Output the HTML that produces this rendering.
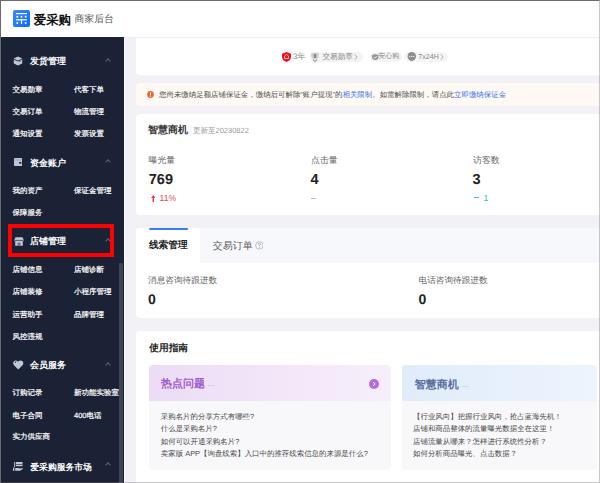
<!DOCTYPE html>
<html><head><meta charset="utf-8">
<style>
*{margin:0;padding:0;box-sizing:border-box}
html,body{width:600px;height:483px;overflow:hidden;background:#f2f2f6}
body{position:relative;font-family:"Liberation Sans",sans-serif;color:#333;text-rendering:geometricPrecision}
.a{position:absolute}
.t{position:absolute;white-space:nowrap;font-size:calc(var(--fs)*1px);line-height:calc(var(--lh,var(--fs))*1px);top:calc((var(--cy) - var(--fs)*.4)*1px)}
#frame{position:absolute;left:0;top:0;width:600px;height:483px;border-top:1px solid #6c6c6c;border-left:1px solid #6a6a6a;border-right:1px solid rgba(116,116,116,.38);border-bottom:1px solid rgba(116,116,116,.38);z-index:50}
.card{position:absolute;background:#fff;border-radius:4px}
.sh{--fs:9;font-weight:bold;color:#fff;left:30px}
.si{--fs:7.5;color:#fff;-webkit-text-stroke:0.2px #fff}
.c1{left:12.5px}.c2{left:74px}
.chev{position:absolute;width:4px;height:4px;border-left:1px solid #5d6477;border-top:1px solid #5d6477;transform:rotate(45deg)}
.ic{position:absolute}
</style></head><body>
<!-- header -->
<div class="a" style="left:0;top:0;width:600px;height:37px;background:#fff"></div>
<div class="a" style="left:13px;top:10px;width:17px;height:17px;border-radius:2px;background:linear-gradient(135deg,#3d8bff,#0b6bff)">
  <svg width="17" height="17" viewBox="0 0 17 17" style="position:absolute;left:0;top:0">
    <rect x="3" y="3" width="11" height="1.2" fill="#fff"/>
    <circle cx="4.3" cy="6.8" r="1" fill="#fff"/><circle cx="8.5" cy="6.8" r="1" fill="#fff"/><circle cx="12.7" cy="6.8" r="1" fill="#fff"/>
    <rect x="3" y="9.2" width="11" height="1.2" fill="#fff"/>
    <rect x="7.9" y="9.2" width="1.2" height="4.8" fill="#fff"/>
    <circle cx="4.3" cy="13" r="1" fill="#fff"/><circle cx="12.7" cy="13" r="1" fill="#fff"/>
  </svg>
</div>
<div class="t" style="left:33.8px;--cy:18.9;--fs:12.4;font-weight:900;color:#111">爱采购</div>
<div class="t" style="left:74.5px;--cy:18.7;--fs:9.85;color:#555">商家后台</div>

<!-- sidebar -->
<div class="a" style="left:0;top:37px;width:124px;height:446px;background:#1b2236"></div>
<svg class="ic" style="left:13px;top:55.5px" width="10" height="10" viewBox="0 0 10 10"><path d="M5 0.5 L9.2 2.5 V7.5 L5 9.6 L0.8 7.5 V2.5 Z" fill="#bfc6d8"/><path d="M1 3.2 L5 5 L9 3.2" stroke="#1b2236" stroke-width="0.9" fill="none"/><path d="M6.8 4.3 V5.8" stroke="#1b2236" stroke-width="0.9"/></svg>
<div class="t sh" style="--cy:61">发货管理</div>
<div class="chev" style="left:106px;top:58.8px"></div>
<div class="t si c1" style="--cy:89.4">交易勋章</div>
<div class="t si c2" style="--cy:89.4">代客下单</div>
<div class="t si c1" style="--cy:111.4">交易订单</div>
<div class="t si c2" style="--cy:111.4">物流管理</div>
<div class="t si c1" style="--cy:133.4">通知设置</div>
<div class="t si c2" style="--cy:133.4">发票设置</div>

<svg class="ic" style="left:13.8px;top:158px" width="8.3" height="8" viewBox="0 0 9 8" preserveAspectRatio="none"><rect x="0" y="0" width="9" height="8" rx="1" fill="#bfc6d8"/><rect x="1" y="1.6" width="7" height="0.7" fill="#8a92a8"/><rect x="5.5" y="4" width="2.5" height="1.6" fill="#1b2236"/></svg>
<div class="t sh" style="--cy:162.2">资金账户</div>
<div class="chev" style="left:106px;top:160.4px"></div>
<div class="t si c1" style="--cy:190.3">我的资产</div>
<div class="t si c2" style="--cy:190.3">保证金管理</div>
<div class="t si c1" style="--cy:211.9">保障服务</div>

<div class="a" style="left:8px;top:224px;width:106px;height:33px;border:4px solid #f00"></div>
<svg class="ic" style="left:13.5px;top:236.5px" width="10" height="9" viewBox="0 0 10 9"><path d="M1.5 0.3 H8.5 L9.8 3.2 Q9.8 4.2 8.8 4.3 V8.7 H1.2 V4.3 Q0.2 4.2 0.2 3.2 Z" fill="#bfc6d8"/><path d="M0.6 3.4 H9.4" stroke="#1b2236" stroke-width="0.7"/><rect x="3.5" y="5.6" width="3" height="3.1" fill="#1b2236" opacity="0.5"/></svg>
<div class="t sh" style="--cy:240.8">店铺管理</div>
<div class="chev" style="left:106px;top:238.6px"></div>
<div class="t si c1" style="--cy:269.4">店铺信息</div>
<div class="t si c2" style="--cy:269.4">店铺诊断</div>
<div class="t si c1" style="--cy:291.4">店铺装修</div>
<div class="t si c2" style="--cy:291.4">小程序管理</div>
<div class="t si c1" style="--cy:313.6">运营助手</div>
<div class="t si c2" style="--cy:313.6">品牌管理</div>
<div class="t si c1" style="--cy:335.5">风控违规</div>

<svg class="ic" style="left:13px;top:359.5px" width="10.5" height="10" viewBox="0 0 10.5 10"><path d="M5.25 9.6 L1 5.2 Q-0.6 3.2 0.9 1.3 Q2.9 -0.6 5.25 1.6 Q7.6 -0.6 9.6 1.3 Q11.1 3.2 9.5 5.2 Z" fill="#bfc6d8"/><path d="M3.4 1.2 Q2.2 1.6 2.4 3" stroke="#1b2236" stroke-width="0.8" fill="none"/></svg>
<div class="t sh" style="--cy:365">会员服务</div>
<div class="chev" style="left:106px;top:362.8px"></div>
<div class="t si c1" style="--cy:391.6">订购记录</div>
<div class="t si c2" style="--cy:391.6">新功能实验室</div>
<div class="t si c1" style="--cy:414.5">电子合同</div>
<div class="t si c2" style="--cy:414.5">400电话</div>
<div class="t si c1" style="--cy:436.4">实力供应商</div>

<svg class="ic" style="left:13px;top:461.5px" width="10" height="9" viewBox="0 0 10 9"><rect x="1.2" y="0" width="1" height="5" fill="#bfc6d8"/><rect x="3" y="0" width="6.5" height="4.2" fill="#bfc6d8"/><rect x="3" y="2" width="6.5" height="0.6" fill="#1b2236"/><rect x="0" y="5.5" width="1.3" height="3.4" fill="#bfc6d8"/><path d="M2.2 6 H6 Q7 6 7 6.8 L9.5 5.8 Q10 6.5 9.5 7.2 L7 8.8 H2.2 Z" fill="#bfc6d8"/></svg>
<div class="t sh" style="--cy:466.3;--fs:8.8;left:30.3px">爱采购服务市场</div>
<div class="chev" style="left:106px;top:463.4px"></div>
<div class="a" style="left:124px;top:37px;width:1px;height:446px;background:#fbfbfd"></div>
<div class="a" style="left:118.8px;top:263px;width:4px;height:220px;background:#3d4456;border-radius:1px"></div>

<!-- main: card 1 -->
<div class="card" style="left:136px;top:27px;width:470px;height:48px"></div>
<svg class="ic" style="left:281.5px;top:51.5px" width="9" height="10" viewBox="0 0 9 10"><path d="M4.5 0 L9 1.8 V5 Q9 8.3 4.5 10 Q0 8.3 0 5 V1.8 Z" fill="#f0131e"/><path d="M2.5 4 L4.5 2.5 L6.5 4 V6.5 H2.5 Z" fill="none" stroke="#fff" stroke-width="0.8" opacity="0.8"/></svg>
<div class="t" style="left:293px;--cy:56.3;--fs:8;color:#888">3年</div>
<div class="a" style="left:310px;top:52px;width:53px;height:9.5px;border-radius:5px;background:#f3f3f4"></div>
<svg class="ic" style="left:310px;top:51.5px" width="10" height="10" viewBox="0 0 10 10"><path d="M1 1.5 L5 0.5 L9 1.5 L8.5 5.5 L5 7.5 L1.5 5.5 Z" fill="#cfcfd2"/><rect x="3.8" y="2" width="2.4" height="4" fill="#888"/><path d="M2.8 7.5 L5 9.5 L7.2 7.5" stroke="#777" stroke-width="1" fill="none"/></svg>
<div class="t" style="left:322.5px;--cy:56.5;--fs:7.6;color:#888">交易勋章</div>
<svg class="ic" style="left:354px;top:53.5px" width="4" height="6" viewBox="0 0 4 6"><path d="M0.6 0.4 L3.2 3 L0.6 5.6" stroke="#999" stroke-width="0.8" fill="none"/></svg>
<div class="a" style="left:370px;top:52px;width:32px;height:9.5px;border-radius:5px;background:#f3f3f4"></div>
<svg class="ic" style="left:372px;top:53.5px" width="6.5" height="6.5" viewBox="0 0 7 7"><path d="M3.5 0 L7 1.2 V3.5 Q7 6 3.5 7 Q0 6 0 3.5 V1.2 Z" fill="#999"/><path d="M1.8 3.4 L3.1 4.6 L5.3 2.4" stroke="#fff" stroke-width="0.9" fill="none"/></svg>
<div class="t" style="left:378.3px;--cy:56.1;--fs:7;color:#888">安心购</div>
<div class="a" style="left:404px;top:52px;width:44px;height:9.5px;border-radius:5px;background:#f5f5f6"></div>
<svg class="ic" style="left:406.5px;top:52px" width="9.5" height="9.5" viewBox="0 0 10 10"><circle cx="5" cy="4.6" r="4.5" fill="#8d8d8d"/><path d="M3 8 L5 10 L6.5 8" fill="#8d8d8d"/><circle cx="2.9" cy="4.6" r="0.7" fill="#fff"/><circle cx="5" cy="4.6" r="0.7" fill="#fff"/><circle cx="7.1" cy="4.6" r="0.7" fill="#fff"/></svg>
<div class="t" style="left:418.3px;--cy:56.5;--fs:7.15;color:#888">7x24H</div>
<svg class="ic" style="left:440.3px;top:53.5px" width="4" height="6" viewBox="0 0 4 6"><path d="M0.6 0.4 L3.2 3 L0.6 5.6" stroke="#999" stroke-width="0.8" fill="none"/></svg>

<!-- alert -->
<div class="card" style="left:136px;top:82.5px;width:470px;height:23px;background:#fef9f4"></div>
<svg class="ic" style="left:147px;top:90.5px" width="7" height="7" viewBox="0 0 7 7"><circle cx="3.5" cy="3.5" r="3.4" fill="#ef6a32"/><rect x="3.05" y="1.5" width="0.9" height="2.6" fill="#fff"/><rect x="3.05" y="4.7" width="0.9" height="0.9" fill="#fff"/></svg>
<div class="t" style="left:159px;--cy:93.6;--fs:7.45;color:#4a4a4a">您尚未缴纳足额店铺保证金，缴纳后可解除“账户提现”的<span style="color:#3570ea">相关限制</span>。如需解除限制，请点此<span style="color:#3570ea">立即缴纳保证金</span></div>

<!-- card 2 -->
<div class="card" style="left:136px;top:113.5px;width:470px;height:101px"></div>
<div class="t" style="left:148px;--cy:130;--fs:10;font-weight:bold;color:#333">智慧商机</div>
<div class="t" style="left:193px;--cy:129.8;--fs:7.5;color:#999">更新至20230822</div>
<div class="t" style="left:148.6px;--cy:159.8;--fs:8.9;color:#666">曝光量</div>
<div class="t" style="left:148.8px;--cy:178.4;--fs:14.5;font-weight:bold;color:#222">769</div>
<svg class="ic" style="left:150.8px;top:194.8px" width="4.5" height="7" viewBox="0 0 4.5 7"><path d="M2.25 0 L4.5 3 H3 V7 H1.5 V3 H0 Z" fill="#e8404f"/></svg>
<div class="t" style="left:159.5px;--cy:197.6;--fs:8.6;color:#e64b5b">11%</div>
<div class="t" style="left:311px;--cy:159.8;--fs:8.9;color:#666">点击量</div>
<div class="t" style="left:310.5px;--cy:178.4;--fs:14.5;font-weight:bold;color:#222">4</div>
<div class="a" style="left:311px;top:198px;width:5px;height:1px;background:#bbb"></div>
<div class="t" style="left:473px;--cy:159.8;--fs:8.9;color:#666">访客数</div>
<div class="t" style="left:472.5px;--cy:178.4;--fs:14.5;font-weight:bold;color:#222">3</div>
<div class="a" style="left:474px;top:197.3px;width:4.8px;height:1.2px;background:#3cc39d"></div>
<div class="t" style="left:483.5px;--cy:197.6;--fs:8.6;color:#3cc39d">1</div>

<!-- card 3 -->
<div class="card" style="left:136px;top:228px;width:470px;height:90px;overflow:hidden">
  <div style="position:absolute;left:0;top:0;width:470px;height:35px;background:#f7f8fb"></div>
  <div style="position:absolute;left:0;top:0;width:64px;height:35px;background:#fff;border-radius:0 4px 0 0"></div>
</div>
<div class="a" style="left:148.6px;top:228px;width:39.3px;height:2px;background:#3c7bf4;border-radius:1px"></div>
<div class="t" style="left:148.9px;--cy:245.3;--fs:9.7;font-weight:bold;color:#222">线索管理</div>
<div class="t" style="left:212.7px;--cy:245.9;--fs:10;color:#5a5a5a">交易订单</div>
<svg class="ic" style="left:254.8px;top:241.2px" width="8.7" height="8.7" viewBox="0 0 9 9"><circle cx="4.5" cy="4.5" r="3.9" stroke="#aaa" stroke-width="0.75" fill="none"/><path d="M3.3 3.6 Q3.3 2.3 4.5 2.3 Q5.7 2.3 5.7 3.4 Q5.7 4.2 4.5 4.6 V5.5" stroke="#999" stroke-width="0.8" fill="none"/><circle cx="4.5" cy="6.6" r="0.5" fill="#999"/></svg>
<div class="t" style="left:148px;--cy:279;--fs:8.65;color:#666">消息咨询待跟进数</div>
<div class="t" style="left:148px;--cy:297.8;--fs:14;font-weight:bold;color:#222">0</div>
<div class="t" style="left:418.5px;--cy:279;--fs:8.65;color:#666">电话咨询待跟进数</div>
<div class="t" style="left:418.5px;--cy:297.8;--fs:14;font-weight:bold;color:#222">0</div>

<!-- card 4 -->
<div class="card" style="left:136px;top:330.7px;width:470px;height:200px"></div>
<div class="t" style="left:149.3px;--cy:347.6;--fs:9.7;font-weight:bold;color:#222">使用指南</div>

<div class="a" style="left:148.7px;top:365.3px;width:242px;height:104.7px;border-radius:4px;background:#f8f8fa;overflow:hidden">
  <div style="position:absolute;left:0;top:0;width:242px;height:35.5px;background:linear-gradient(90deg,#ecdcf6,#f7effb)"></div>
</div>
<div class="t" style="left:161px;--cy:383.3;--fs:11;font-weight:bold;color:#a05bcf">热点问题</div>
<div class="t" style="left:207.5px;--cy:382.5;--fs:8.5;color:#b9a0cc">...</div>
<svg class="ic" style="left:368.7px;top:378.7px" width="10" height="10" viewBox="0 0 10 10"><circle cx="5" cy="5" r="5" fill="#b56be0"/><path d="M4.2 3 L6.1 5 L4.2 7" stroke="#fff" stroke-width="1" fill="none"/></svg>
<div class="t" style="left:160.8px;top:411.2px;--fs:7.45;--lh:12.25;color:#464646">采购名片的分享方式有哪些?<br>什么是采购名片?<br>如何可以开通采购名片?<br>卖家版 APP【询盘线索】入口中的推荐线索信息的来源是什么?</div>

<div class="a" style="left:402px;top:365.3px;width:195px;height:104.7px;border-radius:4px;background:#f8f8fa;overflow:hidden">
  <div style="position:absolute;left:0;top:0;width:195px;height:35.5px;background:linear-gradient(90deg,#e0ecfb,#edf4fd)"></div>
</div>
<div class="t" style="left:414.7px;--cy:384;--fs:11;font-weight:bold;color:#55719f">智慧商机</div>
<div class="t" style="left:461.5px;--cy:383.2;--fs:8.5;color:#aab5c6">...</div>
<div class="t" style="left:413px;top:411.2px;--fs:7.45;--lh:12.25;color:#464646">【行业风向】把握行业风向，抢占蓝海先机！<br>店铺和商品整体的流量曝光数据全在这里！<br>店铺流量从哪来？怎样进行系统性分析？<br>如何分析商品曝光、点击数据？</div>

<div class="a" style="left:124px;top:37px;width:476px;height:2px;background:linear-gradient(#eaeaea,rgba(240,240,240,0))"></div>
<div id="frame"></div>
</body></html>
